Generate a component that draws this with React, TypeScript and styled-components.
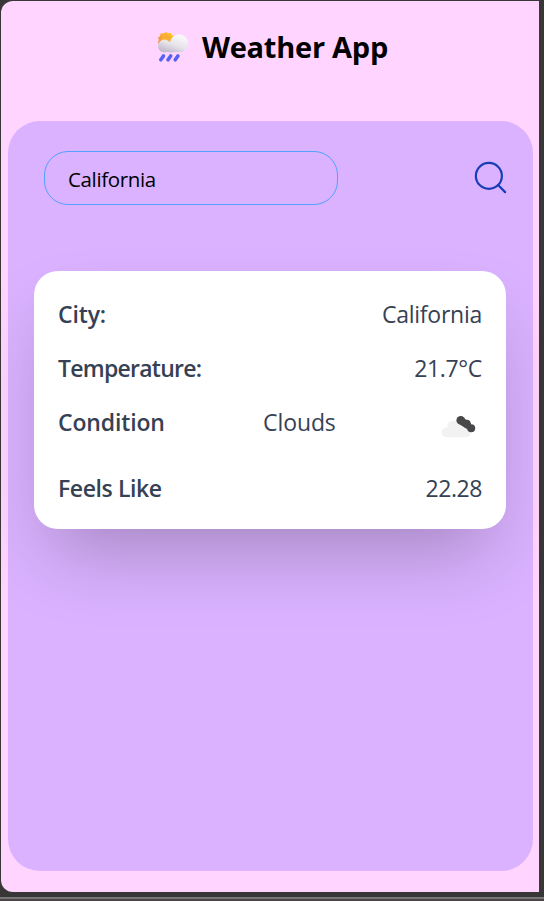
import React, { useState } from "react";
import styled, { createGlobalStyle } from "styled-components";
import { Search } from "lucide-react";

const GlobalStyle = createGlobalStyle`
  * { box-sizing: border-box; }
  body { margin: 0; background: #393637; font-family: "Open Sans", "Noto Sans", sans-serif; }
`;

const Frame = styled.div`
  height: 901px;
  padding: 1px 5px 0 1px;
  overflow: hidden;
  background: linear-gradient(#393637 0 897px, #777576 897px 899px, #4b4549 899px);
`;

const Screen = styled.main`
  height: 891px;
  padding: 0 6px 0 7px;
  background: #ffd5ff;
  border-radius: 12px 0 0 12px;
`;

const Header = styled.header`
  height: 120px;
  padding: 26px 0 0 4px;
  display: flex;
  align-items: flex-start;
  justify-content: center;
  gap: 13px;
`;

const RainIcon = styled.svg`
  width: 32px;
  height: 32px;
  margin-top: 4px;
`;

const Title = styled.h1`
  margin: 0;
  font-size: 29px;
  line-height: 40px;
  font-weight: 700;
  letter-spacing: -0.25px;
  color: #000;
`;

const Panel = styled.section`
  height: 750px;
  padding: 30px 27px 0 26px;
  background: #dab2ff;
  border-radius: 32px;
`;

const SearchRow = styled.form`
  display: flex;
  align-items: center;
  justify-content: space-between;
  height: 54px;
  padding-left: 10px;
`;

const CityInput = styled.input`
  width: 294px;
  height: 54px;
  padding: 2px 24px 0 23px;
  border: 1px solid #51a2ff;
  border-radius: 24px;
  outline: none;
  background: transparent;
  color: #000;
  font-family: inherit;
  font-size: 20.5px;
  letter-spacing: -0.35px;
`;

const SearchButton = styled.button`
  display: flex;
  padding: 0;
  margin: -2px -4px 0 0;
  border: 0;
  background: none;
  color: #193cb8;
`;

const Card = styled.dl`
  display: flex;
  flex-direction: column;
  gap: 22px;
  height: 258px;
  margin: 66px 0 0;
  padding: 27px 24px 24px;
  background: #fff;
  border-radius: 24px;
  box-shadow: 0 37.5px 75px -18px rgba(0, 0, 0, 0.25);
  color: #364153;
`;

const Row = styled.div<{ $tall?: boolean }>`
  display: flex;
  justify-content: space-between;
  height: ${(p) => (p.$tall ? 44 : 32)}px;
  font-size: 23px;
  line-height: 32px;
`;

const Label = styled.dt<{ $tracking: number }>`
  font-weight: 600;
  letter-spacing: ${(p) => p.$tracking}px;
`;

const Value = styled.dd<{ $tracking: number }>`
  margin: 0;
  letter-spacing: ${(p) => p.$tracking}px;
`;

const CloudIcon = styled.svg`
  width: 48px;
  height: 48px;
  margin-top: -4px;
`;

const RainGlyph = () => (
  <RainIcon viewBox="0 0 32 32">
    <defs>
      <linearGradient id="puff" gradientUnits="userSpaceOnUse" x1="20" y1="4" x2="14" y2="22">
        <stop offset="0" stopColor="#f8f8f9" />
        <stop offset="0.55" stopColor="#e6e3ea" />
        <stop offset="1" stopColor="#c3bccd" />
      </linearGradient>
      <linearGradient id="sun" x1="0" y1="1" x2="1" y2="0">
        <stop offset="0" stopColor="#ef8130" />
        <stop offset="1" stopColor="#ffd02d" />
      </linearGradient>
    </defs>
    <path
      d="M9 1l2 1.2 2.6-.5 1 2 2.100 1-.6 2.400 1.200 2L7 15l-5-1.500L1 11l1-2-1-2.300L3.200 5l.3-2.500 2.800.1z"
      fill="url(#sun)"
    />
    <circle cx="9" cy="8.500" r="5" fill="#f9ae32" />
    <g fill="url(#puff)">
      <rect x="2" y="12" width="26" height="9" rx="4.500" />
      <circle cx="7.500" cy="15" r="6.500" />
      <circle cx="14" cy="16" r="5.500" />
      <circle cx="22" cy="12.300" r="9" />
    </g>
    <path
      d="M6.500 25l-2.700 3.800M13.700 25L11 28.800M20.900 25l-2.700 3.800"
      stroke="#5561f2"
      strokeWidth="3.600"
      strokeLinecap="round"
    />
  </RainIcon>
);

const BrokenClouds = () => (
  <CloudIcon viewBox="0 0 48 48">
    <g fill="#f2f2f2">
      <rect x="7.700" y="25.500" width="29" height="9.700" rx="4.800" />
      <circle cx="19.300" cy="24.500" r="6" />
      <circle cx="27" cy="27" r="5.500" />
    </g>
    <g fill="#48484a">
      <circle cx="26.700" cy="18.300" r="4.300" />
      <circle cx="32.700" cy="21.800" r="4" />
      <circle cx="37.200" cy="26.200" r="4" />
      <path d="M25 15.500l3-1 9 7v8l-12-7.500z" />
    </g>
  </CloudIcon>
);

export default function App() {
  const [city, setCity] = useState("California");
  return (
    <>
      <GlobalStyle />
      <Frame>
        <Screen>
          <Header>
            <RainGlyph />
            <Title>Weather App</Title>
          </Header>
          <Panel>
            <SearchRow onSubmit={(e) => e.preventDefault()}>
              <CityInput value={city} onChange={(e) => setCity(e.target.value)} aria-label="City" />
              <SearchButton aria-label="Search">
                <Search size={39} strokeWidth={1.35} />
              </SearchButton>
            </SearchRow>
            <Card>
              <Row>
                <Label $tracking={-0.15}>City:</Label>
                <Value $tracking={-0.25}>California</Value>
              </Row>
              <Row>
                <Label $tracking={-0.75}>Temperature:</Label>
                <Value $tracking={-0.35}>21.7°C</Value>
              </Row>
              <Row $tall>
                <Label $tracking={-0.15}>Condition</Label>
                <Value $tracking={-0.1}>Clouds</Value>
                <BrokenClouds />
              </Row>
              <Row>
                <Label $tracking={-0.4}>Feels Like</Label>
                <Value $tracking={-0.45}>22.28</Value>
              </Row>
            </Card>
          </Panel>
        </Screen>
      </Frame>
    </>
  );
}
